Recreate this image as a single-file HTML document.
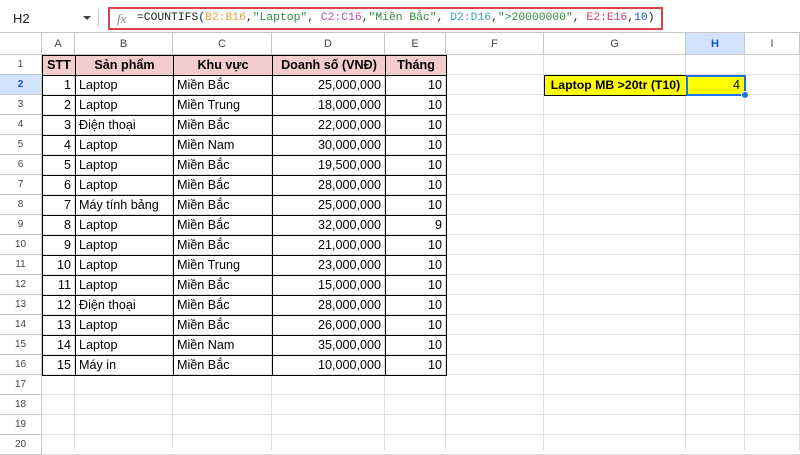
<!DOCTYPE html>
<html><head><meta charset="utf-8"><style>
*{margin:0;padding:0;box-sizing:border-box}
body{width:800px;height:450px;overflow:hidden;background:#fff;font-family:"Liberation Sans",Arial,sans-serif;position:relative}
.fb{position:absolute;left:0;top:0;width:800px;height:33px;background:#fff;border-bottom:1px solid #c7c7c7}
.name{position:absolute;left:13px;top:11px;font-size:13px;color:#222}
.caret{position:absolute;left:83px;top:16px;border-left:4px solid transparent;border-right:4px solid transparent;border-top:4px solid #444}
.sep{position:absolute;left:98px;top:9px;width:1px;height:18px;background:#ccc}
.fbox{position:absolute;left:108px;top:7px;width:555px;height:23px;border:2px solid #d9434a;font-family:"Liberation Mono",monospace;font-size:11.35px;line-height:19px;padding-left:27px;white-space:pre;color:#222}
.fx{position:absolute;left:7px;top:0;font-family:"Liberation Serif",serif;font-style:italic;color:#888;font-size:13px}
.o{color:#e8a23a}.g{color:#2e8b3e}.p{color:#b74fb7}.c{color:#3aa0c8}.r{color:#c9406a}.b{color:#2255cc}
.cell{position:absolute;font-size:12.6px;line-height:20px;white-space:nowrap;overflow:hidden;color:#000}
.hl{position:absolute;background:#e1e1e1}
.colh{position:absolute;top:33px;height:22px;font-size:11px;color:#444;text-align:center;line-height:22px;border-right:1px solid #c7c7c7;border-bottom:1px solid #c7c7c7;background:#fff}
.rowh{position:absolute;left:0;width:42px;height:20px;font-size:10px;color:#444;text-align:center;line-height:20px;border-bottom:1px solid #c7c7c7;border-right:1px solid #c7c7c7;background:#fff}
</style></head><body>
<div class="fb"><div class="name">H2</div><div class="caret"></div><div class="sep"></div>
<div class="fbox"><span class="fx">fx</span>=COUNTIFS(<span class="o">B2:B16</span>,<span class="g">"Laptop"</span>, <span class="p">C2:C16</span>,<span class="g">"Miền Bắc"</span>, <span class="c">D2:D16</span>,<span class="g">"&gt;20000000"</span>, <span class="r">E2:E16</span>,<span class="b">10</span>)</div></div>
<div id="grid"></div>
<script>
const cols=[42,75,173,272,385,446,544,686,745,800];
const names="ABCDEFGHI";
let h='';
for(let i=1;i<cols.length;i++){h+=`<div class="hl" style="left:${cols[i]-1}px;top:55px;width:1px;height:395px"></div>`}
for(let r=1;r<=20;r++){h+=`<div class="hl" style="left:42px;top:${55+20*r-1}px;width:758px;height:1px"></div>`}
h+=`<div class="colh" style="left:0;width:42px"></div>`;
for(let i=0;i<9;i++){let sel=i==7;h+=`<div class="colh" style="left:${cols[i]}px;width:${cols[i+1]-cols[i]}px;${sel?'background:#d3e3fd;font-weight:bold;color:#0b57d0':''}">${names[i]}</div>`}
for(let r=1;r<=20;r++){let sel=r==2;h+=`<div class="rowh" style="top:${55+20*(r-1)}px;${sel?'background:#d3e3fd;font-weight:bold;color:#0b57d0':''}">${r}</div>`}
const data=[["STT","Sản phẩm","Khu vực","Doanh số (VNĐ)","Tháng"],
[1,"Laptop","Miền Bắc","25,000,000",10],[2,"Laptop","Miền Trung","18,000,000",10],[3,"Điện thoại","Miền Bắc","22,000,000",10],[4,"Laptop","Miền Nam","30,000,000",10],[5,"Laptop","Miền Bắc","19,500,000",10],[6,"Laptop","Miền Bắc","28,000,000",10],[7,"Máy tính bảng","Miền Bắc","25,000,000",10],[8,"Laptop","Miền Bắc","32,000,000",9],[9,"Laptop","Miền Bắc","21,000,000",10],[10,"Laptop","Miền Trung","23,000,000",10],[11,"Laptop","Miền Bắc","15,000,000",10],[12,"Điện thoại","Miền Bắc","28,000,000",10],[13,"Laptop","Miền Bắc","26,000,000",10],[14,"Laptop","Miền Nam","35,000,000",10],[15,"Máy in","Miền Bắc","10,000,000",10]];
data.forEach((row,r)=>{row.forEach((v,c)=>{const L=cols[c],W=cols[c+1]-L,T=55+20*r;
let st=`left:${L}px;top:${T}px;width:${W+1}px;height:21px;border:1px solid #000;`;
if(r==0)st+='background:#f4cccc;font-weight:bold;text-align:center;';
else if(typeof v=="number"||c==3)st+='text-align:right;padding-right:4px;';
else st+='padding-left:3px;';
h+=`<div class="cell" style="${st}line-height:19px">${v}</div>`})});
h+=`<div class="cell" style="left:544px;top:75px;width:143px;height:21px;border:1px solid #000;background:#ffff00;font-weight:bold;text-align:center;line-height:19px;font-size:12.3px">Laptop MB &gt;20tr (T10)</div>`;
h+=`<div class="cell" style="left:686px;top:75px;width:60px;height:21px;border:2px solid #1a73e8;background:#ffff00;text-align:right;padding-right:4px;line-height:17px">4</div>`;
h+=`<div style="position:absolute;left:741px;top:91px;width:8px;height:8px;border-radius:50%;background:#1a73e8;border:1px solid #fff"></div>`;
document.getElementById('grid').innerHTML=h;
</script>
</body></html>
